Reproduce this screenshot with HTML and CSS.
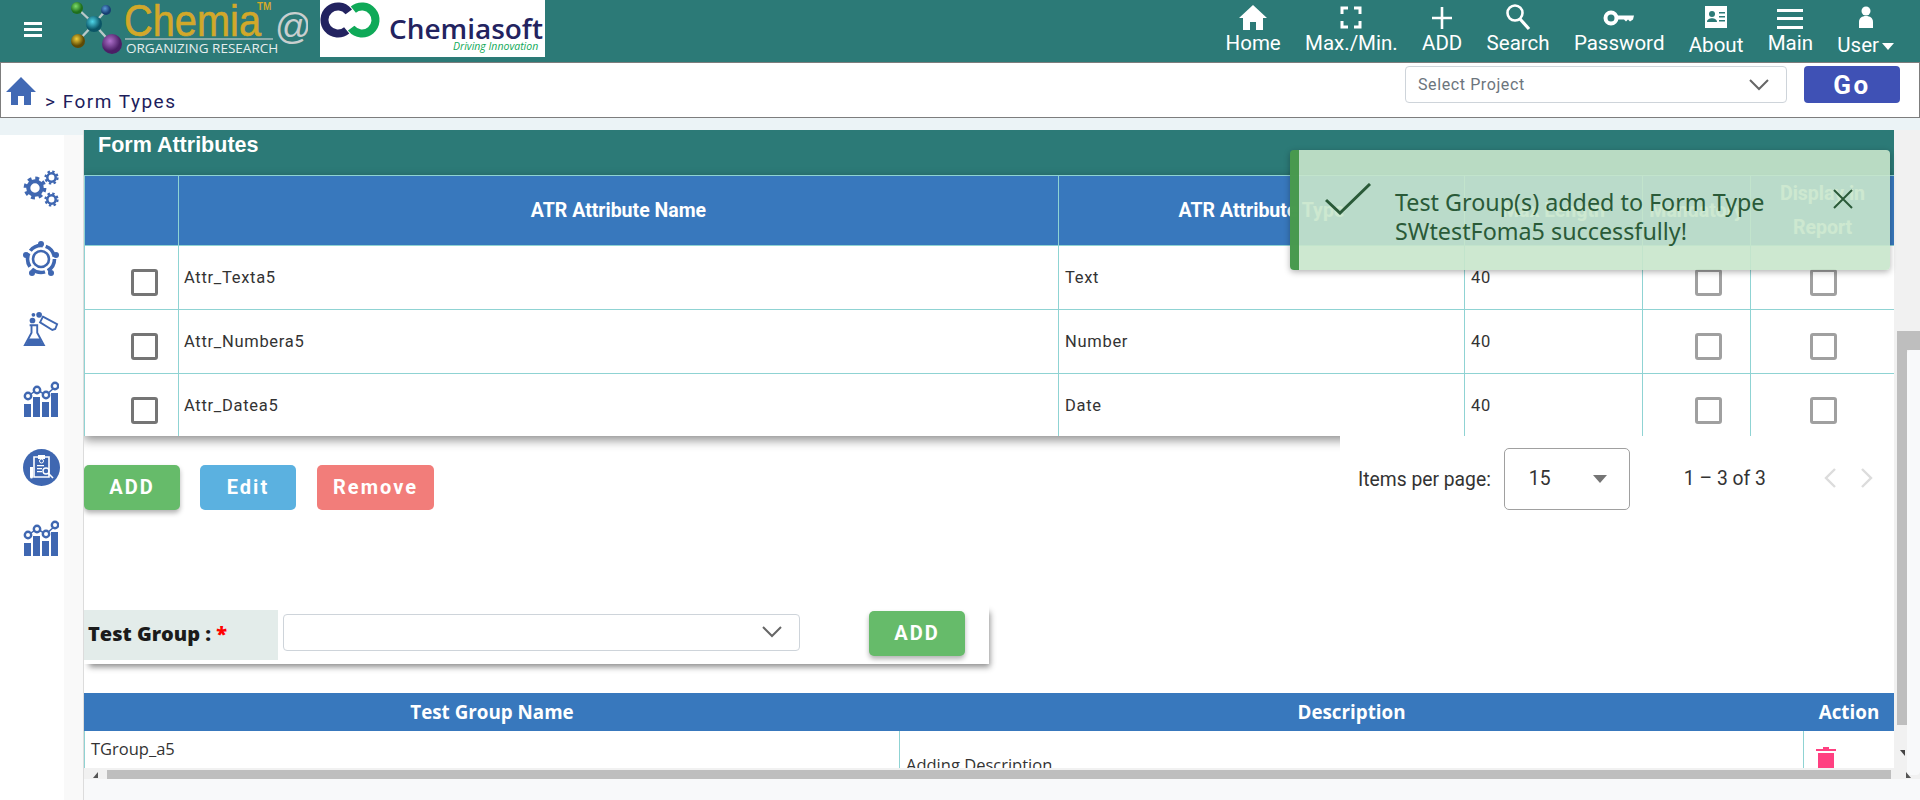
FILE: index.html
```html
<!DOCTYPE html>
<html lang="en">
<head>
  <meta charset="UTF-8" />
  <title>Form Types</title>
  <link rel="stylesheet" href="styles.css">
</head>
<body>

  <svg class="defs" width="0" height="0">
    <defs>
      <radialGradient id="ball-green" cx="40%" cy="35%"><stop offset="0" stop-color="#7ddc6a"/><stop offset="1" stop-color="#1f6f1c"/></radialGradient>
      <radialGradient id="ball-blue" cx="40%" cy="35%"><stop offset="0" stop-color="#5a9ad8"/><stop offset="1" stop-color="#173f73"/></radialGradient>
      <radialGradient id="ball-teal" cx="40%" cy="35%"><stop offset="0" stop-color="#4fd5e8"/><stop offset="1" stop-color="#0b5566"/></radialGradient>
      <radialGradient id="ball-gold" cx="40%" cy="35%"><stop offset="0" stop-color="#f0cf3a"/><stop offset="1" stop-color="#5e4a05"/></radialGradient>
      <radialGradient id="ball-purple" cx="40%" cy="35%"><stop offset="0" stop-color="#b072cc"/><stop offset="1" stop-color="#4b1f66"/></radialGradient>
    </defs>
    <symbol id="gear" viewBox="0 0 20 20">
      <circle cx="10" cy="10" r="8" fill="none" stroke="currentColor" stroke-width="3" stroke-dasharray="3.2 3.08"/>
      <circle cx="10" cy="10" r="5.6" fill="none" stroke="currentColor" stroke-width="3.4"/>
    </symbol>
    <symbol id="chart" viewBox="0 0 36 36">
      <path d="M1 23h7v13H1zM10 16h7v20h-7zM19 21h7v15h-7zM28 12h7v24h-7z" fill="currentColor"/>
      <path d="M5 15l9-6 9 5 9-8" fill="none" stroke="currentColor" stroke-width="1.5"/>
      <circle cx="5" cy="15" r="3.2" fill="#fff" stroke="currentColor" stroke-width="2.4"/>
      <circle cx="14" cy="9" r="3.2" fill="#fff" stroke="currentColor" stroke-width="2.4"/>
      <circle cx="23" cy="14" r="3.2" fill="#fff" stroke="currentColor" stroke-width="2.4"/>
      <circle cx="32" cy="5" r="3.2" fill="#fff" stroke="currentColor" stroke-width="2.4"/>
    </symbol>
  </svg>

  <!-- Top bar -->
  <div class="header">
    <div class="brand">
      <div class="menu-btn"><span></span><span></span><span></span></div>
      <svg class="logo-chemia" width="240" height="56" viewBox="0 0 240 56">
        <path d="M9 8l17 16M38 10L26 24M10 41l16-17M44 44L26 24" stroke="#b9c9c9" stroke-width="2.4"/>
        <circle cx="9" cy="8" r="6" fill="url(#ball-green)"/>
        <circle cx="38" cy="10" r="5" fill="url(#ball-blue)"/>
        <circle cx="26" cy="24" r="8" fill="url(#ball-teal)"/>
        <circle cx="10" cy="41" r="7" fill="url(#ball-gold)"/>
        <circle cx="44" cy="44" r="10" fill="url(#ball-purple)"/>
        <text x="56" y="36" class="logo-name" textLength="137" lengthAdjust="spacingAndGlyphs">Chemia</text>
        <text x="189" y="10" class="logo-tm">TM</text>
        <path d="M57 39h148" stroke="#a9bdbd" stroke-width="1.5"/>
        <text x="58" y="53" class="logo-sub">ORGANIZING RESEARCH</text>
        <text x="207" y="39" class="logo-at">@</text>
      </svg>
      <svg class="logo-soft" width="225" height="57" viewBox="0 0 225 57">
        <circle cx="18" cy="20" r="13.5" fill="none" stroke="#232360" stroke-width="8" stroke-dasharray="64 21" transform="rotate(50 18 20)"/>
        <circle cx="42" cy="20" r="13.5" fill="none" stroke="#0fa958" stroke-width="8" stroke-dasharray="64 21" transform="rotate(230 42 20)"/>
        <text x="69" y="39" class="soft-name" textLength="154" lengthAdjust="spacingAndGlyphs">Chemiasoft</text>
        <text x="133" y="50" class="soft-tag">Driving Innovation</text>
      </svg>
    </div>
    <div class="nav">
      <div class="nav-item">
        <svg width="30" height="26" viewBox="0 0 30 26"><path d="M15 1L1 14h4v12h7v-8h6v8h7V14h4z" fill="#fff"/></svg>
        <span>Home</span>
      </div>
      <div class="nav-item">
        <svg width="24" height="26" viewBox="0 0 24 26"><path d="M3 10V4h6M15 4h6v6M21 17v6h-6M9 23H3v-6" fill="none" stroke="#fff" stroke-width="3"/></svg>
        <span>Max./Min.</span>
      </div>
      <div class="nav-item">
        <svg width="24" height="26" viewBox="0 0 24 26"><path d="M12 3v22M2 14h20" stroke="#fff" stroke-width="2.6"/></svg>
        <span>ADD</span>
      </div>
      <div class="nav-item">
        <svg width="28" height="28" viewBox="0 0 28 28"><circle cx="11" cy="10" r="7.5" fill="none" stroke="#fff" stroke-width="2.6"/><path d="M16 16l9 10" stroke="#fff" stroke-width="3.2"/></svg>
        <span>Search</span>
      </div>
      <div class="nav-item">
        <svg width="32" height="26" viewBox="0 0 32 26"><circle cx="8" cy="14" r="5.5" fill="none" stroke="#fff" stroke-width="4"/><path d="M13 11.5h18l-1 4-3 2-2-2-2 2-2-2h-8z" fill="#fff"/></svg>
        <span>Password</span>
      </div>
      <div class="nav-item nav-low">
        <svg width="26" height="26" viewBox="0 0 26 26"><path d="M2 2h22v22H2z" fill="#fff"/><circle cx="9" cy="10" r="3" fill="#2c7a77"/><path d="M4 18c0-5 10-5 10 0zM16 8h6v1.5h-6zM16 12h6v1.5h-6zM16 16h6v1.5h-6z" fill="#2c7a77"/></svg>
        <span>About</span>
      </div>
      <div class="nav-item">
        <svg width="26" height="26" viewBox="0 0 26 26"><path d="M0 5h26v3H0zM0 13h26v3H0zM0 22h26v3H0z" fill="#fff"/></svg>
        <span>Main</span>
      </div>
      <div class="nav-item nav-low">
        <svg width="18" height="26" viewBox="0 0 18 26"><circle cx="9" cy="7" r="4.5" fill="#fff"/><path d="M2 24v-6c0-4 3-6 7-6s7 2 7 6v6z" fill="#fff"/></svg>
        <span>User<i class="caret"></i></span>
      </div>
    </div>
  </div>

  <!-- Breadcrumb bar -->
  <div class="crumb-bar">
    <div class="crumb">
      <svg width="32" height="32" viewBox="0 0 32 32"><path d="M16 2L1 17h5v13h7v-9h6v9h7V17h5z" fill="#4169b4"/></svg>
      <span>&gt; Form Types</span>
    </div>
    <div class="crumb-tools">
      <div class="select select-project">
        <span>Select Project</span>
        <svg width="22" height="12" viewBox="0 0 22 12"><path d="M2 1l9 9 9-9" fill="none" stroke="#666" stroke-width="2"/></svg>
      </div>
      <button class="btn-go">Go</button>
    </div>
  </div>

  <div class="layout">
    <div class="sidebar">
      <svg class="side-icon" width="36" height="37" viewBox="0 0 36 37">
        <use href="#gear" x="0" y="6" width="24" height="24"/>
        <use href="#gear" x="21" y="0" width="15" height="15"/>
        <use href="#gear" x="21" y="22" width="15" height="15"/>
      </svg>
      <svg class="side-icon" width="36" height="36" viewBox="0 0 36 36">
        <circle cx="18" cy="18" r="8" fill="none" stroke="currentColor" stroke-width="2.6"/>
        <circle cx="18" cy="18" r="13.5" fill="none" stroke="currentColor" stroke-width="3.6" stroke-dasharray="14 3"/>
        <circle cx="18" cy="3" r="3" fill="currentColor"/>
        <circle cx="33" cy="14" r="3" fill="currentColor"/>
        <circle cx="3" cy="14" r="3" fill="currentColor"/>
        <circle cx="9" cy="32" r="3" fill="currentColor"/>
        <circle cx="28" cy="32" r="3" fill="currentColor"/>
      </svg>
      <svg class="side-icon" width="36" height="36" viewBox="0 0 36 38">
        <path d="M6 15h9M8 15v8L1 36h20l-7-13v-8" fill="none" stroke="currentColor" stroke-width="2"/>
        <path d="M5 29L2 36h18l-3-7z" fill="currentColor"/>
        <circle cx="9" cy="10" r="3" fill="currentColor"/>
        <circle cx="16" cy="4" r="3" fill="currentColor"/>
        <circle cx="10" cy="4" r="2" fill="currentColor"/>
        <path d="M20 6l15 8-2 5-3 1-13-8z" fill="none" stroke="currentColor" stroke-width="2"/>
      </svg>
      <svg class="side-icon" width="36" height="36"><use href="#chart"/></svg>
      <svg class="side-icon icon-report" width="37" height="37" viewBox="0 0 37 37">
        <circle cx="18.5" cy="18.5" r="18.5" fill="currentColor"/>
        <path d="M11 8h15v20H11z" fill="none" stroke="#fff" stroke-width="1.6"/>
        <path d="M15 6h7v4h-7zM14 16h7v1.2h-7zM14 19h5v1.2h-5zM14 22h5v1.2h-5zM7 18h3v10a1.5 1.5 0 0 1-3 0z" fill="#fff"/>
        <circle cx="18.5" cy="12" r="2" fill="none" stroke="#fff"/>
        <circle cx="23" cy="22" r="3" fill="none" stroke="#fff" stroke-width="1.4"/>
        <path d="M25 24l5 5" stroke="#fff" stroke-width="1.6"/>
      </svg>
      <svg class="side-icon" width="36" height="36"><use href="#chart"/></svg>
    </div>

    <div class="content">
      <div class="content-top">
        <div class="main-scroll">

          <div class="panel-title">Form Attributes</div>
          <table class="attr-table">
            <colgroup>
              <col class="c-check"><col class="c-name"><col class="c-type"><col class="c-len"><col class="c-man"><col class="c-disp">
            </colgroup>
            <thead>
              <tr>
                <th></th>
                <th>ATR Attribute Name</th>
                <th>ATR Attribute Type</th>
                <th>Max Length</th>
                <th>Mandatory</th>
                <th class="th-wrap">Display in<br>Report</th>
              </tr>
            </thead>
            <tbody>
              <tr>
                <td class="td-check"><span class="check"></span></td>
                <td class="td-name">Attr_Texta5</td>
                <td>Text</td>
                <td>40</td>
                <td class="td-man"><span class="check light"></span></td>
                <td class="td-disp"><span class="check light"></span></td>
              </tr>
              <tr>
                <td class="td-check"><span class="check"></span></td>
                <td class="td-name">Attr_Numbera5</td>
                <td>Number</td>
                <td>40</td>
                <td class="td-man"><span class="check light"></span></td>
                <td class="td-disp"><span class="check light"></span></td>
              </tr>
              <tr>
                <td class="td-check"><span class="check"></span></td>
                <td class="td-name">Attr_Datea5</td>
                <td>Date</td>
                <td>40</td>
                <td class="td-man"><span class="check light"></span></td>
                <td class="td-disp"><span class="check light"></span></td>
              </tr>
            </tbody>
          </table>

          <div class="table-foot">
            <div class="actions">
              <button class="btn btn-add raised">ADD</button>
              <button class="btn btn-edit">Edit</button>
              <button class="btn btn-remove">Remove</button>
            </div>
            <div class="paginator">
              <span class="pg-label">Items per page:</span>
              <div class="pg-select"><span>15</span><i class="pg-arrow"></i></div>
              <span class="pg-range">1 – 3 of 3</span>
              <svg width="50" height="22" viewBox="0 0 50 22"><path d="M11 2L2 11l9 9M38 2l9 9-9 9" fill="none" stroke="#dcdcdc" stroke-width="2.4"/></svg>
            </div>
          </div>

          <div class="group-form">
            <label class="group-label">Test Group : <b>*</b></label>
            <div class="select select-group">
              <svg width="22" height="12" viewBox="0 0 22 12"><path d="M2 1l9 9 9-9" fill="none" stroke="#666" stroke-width="2"/></svg>
            </div>
            <button class="btn btn-add raised btn-group-add">ADD</button>
          </div>

          <table class="group-table">
            <colgroup><col class="g-name"><col class="g-desc"><col class="g-act"></colgroup>
            <thead>
              <tr><th>Test Group Name</th><th>Description</th><th>Action</th></tr>
            </thead>
            <tbody>
              <tr>
                <td class="td-top">TGroup_a5</td>
                <td>Adding Description</td>
                <td class="td-top">
                  <svg class="trash" width="20" height="26" viewBox="0 0 20 26"><path d="M0 2h7V0h6v2h7v2H0zM2 6h16v20H2z" fill="#ff4081"/></svg>
                </td>
              </tr>
            </tbody>
          </table>

        </div>
        <div class="vscroll">
          <div class="v-thumb"></div>
          <i class="v-arrow"></i>
          <div class="v-panel"></div>
        </div>
      </div>
      <div class="hscroll">
        <i class="h-left"></i>
        <div class="h-thumb"></div>
        <i class="h-right"></i>
      </div>
      <div class="bottom-panel"></div>
    </div>
  </div>

  <!-- Toast -->
  <div class="toast">
    <svg class="toast-check" width="46" height="32" viewBox="0 0 46 32"><path d="M1 17l14 13L45 1" fill="none" stroke="#2a5a38" stroke-width="3"/></svg>
    <div class="toast-text">Test Group(s) added to Form Type<br>SWtestFoma5 successfully!</div>
    <svg class="toast-close" width="20" height="20" viewBox="0 0 20 20"><path d="M1 1l18 18M19 1L1 19" stroke="#2a5a38" stroke-width="2"/></svg>
  </div>

</body>
</html>
```

FILE: styles.css
```css
* {
  box-sizing: border-box;
}

html, body {
  margin: 0;
  padding: 0;
  height: 100%;
  overflow: hidden;
  background: #ebf3f6;
  font-family: Roboto, Arial, sans-serif;
}

body {
  position: relative;
}

.defs {
  position: absolute;
}

/* top bar */
.header {
  height: 62px;
  background: #2c7a77;
  display: flex;
  justify-content: space-between;
  color: #fff;
}

.brand {
  display: flex;
  align-items: flex-start;
}

.menu-btn {
  width: 18px;
  margin: 22px 26px 0 24px;
  display: flex;
  flex-direction: column;
  gap: 3px;
}

.menu-btn span {
  display: block;
  height: 3px;
  background: #fff;
}

.logo-chemia {
  display: block;
}

.logo-name {
  font: 400 44px "Liberation Sans", sans-serif;
  fill: #d2a82a;
  stroke: #d2a82a;
  stroke-width: 0.6px;
}

.logo-tm {
  font: 700 10px "Liberation Sans", sans-serif;
  fill: #d2a82a;
}

.logo-sub {
  font: 400 13.5px "Open Sans", sans-serif;
  fill: #e6eeee;
}

.logo-at {
  font: 400 36px "Liberation Sans", sans-serif;
  fill: #c9cfcf;
}

.logo-soft {
  display: block;
  background: #fff;
  margin-left: 12px;
}

.soft-name {
  font: 600 27px "Open Sans", sans-serif;
  fill: #232360;
}

.soft-tag {
  font: italic 400 10.5px "Open Sans", sans-serif;
  fill: #0fa958;
}

.nav {
  display: flex;
  gap: 24.3px;
  padding-right: 26px;
}

.nav-item {
  display: flex;
  flex-direction: column;
  align-items: center;
  font-size: 20.5px;
  line-height: 24px;
  padding-top: 3px;
}

.nav-low span {
  margin-top: 2px;
}

.nav-item svg {
  height: 28px;
  display: block;
}

.caret {
  display: inline-block;
  margin-left: 3px;
  vertical-align: 2px;
  border: 6px solid transparent;
  border-top: 7px solid #fff;
  border-bottom: 0;
}

/* breadcrumb */
.crumb-bar {
  height: 56px;
  background: #fff;
  border: 1px solid #7d7d7d;
  display: flex;
  justify-content: space-between;
}

.crumb {
  display: flex;
  align-items: flex-end;
  gap: 8px;
  padding: 0 0 4px 4px;
  color: #1d1d5c;
  font-size: 19px;
  letter-spacing: 1.5px;
}

.crumb svg {
  margin-bottom: 6px;
}

.crumb-tools {
  display: flex;
  gap: 17px;
  padding: 3px 19px 0 0;
}

.select {
  height: 37px;
  background: #fff;
  border: 1px solid #ced4da;
  border-radius: 4px;
  display: flex;
  align-items: center;
  justify-content: space-between;
}

.select-project {
  width: 382px;
  padding: 0 16px 0 12px;
  color: #6c757d;
  font-size: 16px;
  letter-spacing: 0.6px;
}

.btn-go {
  width: 96px;
  height: 37px;
  border: 0;
  border-radius: 4px;
  background: #3f51b5;
  color: #fff;
  font: 700 26px Roboto, sans-serif;
  letter-spacing: 2.5px;
}

/* page body */
.layout {
  display: flex;
  margin-top: 12px;
  height: 670px;
}

.sidebar {
  width: 64px;
  margin-top: 5px;
  background: #fff;
  display: flex;
  flex-direction: column;
  align-items: center;
  flex-shrink: 0;
  padding: 35px 0 0 18px;
  gap: 34px;
  color: #3f67b1;
}

.side-icon {
  display: block;
  flex-shrink: 0;
}

.icon-report {
  margin-top: -2px;
}

.content {
  flex: 1;
  margin-left: 19px;
  background: #f8f9fa;
  box-shadow: -19px 5px 0 #f9f9f9;
  border-left: 1px solid #dcdcdc;
  position: relative;
}

.content-top {
  display: flex;
  height: 638px;
}

.main-scroll {
  width: 1810px;
  flex-shrink: 0;
  overflow: hidden;
  background: #fff;
}

.panel-title {
  height: 45px;
  background: #2c7a77;
  color: #fff;
  padding: 3px 14px;
  font: 700 21.5px "Liberation Sans", Arial, sans-serif;
  line-height: 24px;
}

/* attribute table */
table {
  border-collapse: collapse;
  table-layout: fixed;
  width: 100%;
}

.attr-table {
  box-shadow: 0 4px 10px rgba(0, 0, 0, 0.45);
}

.c-check { width: 94px; }
.c-name { width: 880px; }
.c-type { width: 406px; }
.c-len { width: 178px; }
.c-man { width: 108px; }
.c-disp { width: 144px; }

.attr-table th {
  height: 70px;
  background: #3878bd;
  color: #fff;
  border: 1px solid #8fd3d3;
  font-size: 19.5px;
  font-weight: 700;
  text-align: center;
  padding: 0;
}

.attr-table .th-wrap {
  line-height: 34px;
}

.attr-table td {
  height: 64px;
  background: #fff;
  border: 1px solid #8fd3d3;
  color: #333;
  font-size: 16.5px;
  letter-spacing: 0.7px;
  padding: 0 6px;
  vertical-align: middle;
}

.attr-table tbody tr:last-child td {
  height: 62px;
  padding-top: 2px;
  border-bottom: 0;
}

.attr-table .td-name {
  padding-left: 5px;
}

.attr-table .td-check {
  padding-left: 46px;
}

.attr-table .td-man {
  padding-left: 52px;
}

.attr-table .td-disp {
  padding-left: 59px;
}

.check {
  display: block;
  width: 27px;
  height: 27px;
  margin-top: 10px;
  border: 3px solid #757575;
  border-radius: 3px;
}

.check.light {
  border-color: #a0a0a0;
}

/* buttons + paginator */
.table-foot {
  position: relative;
  height: 169px;
  display: flex;
  justify-content: space-between;
}

.actions {
  display: flex;
  gap: 20px;
  align-items: flex-start;
  padding-top: 29px;
}

.btn {
  height: 45px;
  border: 0;
  border-radius: 5px;
  color: #fff;
  font: 700 20px Roboto, sans-serif;
  letter-spacing: 2px;
  width: 96px;
}

.raised {
  box-shadow: 0 3px 5px rgba(0, 0, 0, 0.3);
}

.btn-add {
  background: #66bb6a;
}

.btn-edit {
  background: #5bb1e0;
}

.btn-remove {
  background: #f27d7a;
  width: 117px;
  margin-left: 1px;
}

.paginator {
  width: 554px;
  height: 90px;
  background: #fff;
  display: flex;
  align-items: flex-start;
  padding: 12px 0 0 18px;
  color: #333;
  font-size: 19.3px;
}

.pg-label {
  margin-top: 20px;
}

.pg-select {
  width: 126px;
  height: 62px;
  margin-left: 13px;
  border: 1px solid #a0a0a0;
  border-radius: 5px;
  padding: 0 24px;
  display: flex;
  align-items: center;
  justify-content: space-between;
}

.pg-arrow {
  border: 7px solid transparent;
  border-top: 8px solid #757575;
  border-bottom: 0;
  margin-right: -2px;
}

.pg-range {
  margin: 19px 58px 0 54px;
}

.paginator svg {
  margin-top: 19px;
}

/* test group form */
.group-form {
  width: 905px;
  height: 59px;
  display: flex;
  align-items: flex-start;
  background: #fff;
  box-shadow: 3px 5px 6px -2px rgba(0, 0, 0, 0.45);
  padding-top: 5px;
}

.group-label {
  width: 194px;
  height: 50px;
  background: #e3ecea;
  color: #1b1b1b;
  font: 800 20px "Open Sans", sans-serif;
  line-height: 47px;
  padding-left: 4px;
}

.group-label b {
  color: #f00;
}

.select-group {
  width: 517px;
  margin: 4px 0 0 5px;
  justify-content: flex-end;
  padding-right: 16px;
}

.btn-group-add {
  margin: 1px 0 0 69px;
}

/* test group table */
.group-table {
  margin-top: 29px;
}

.g-name { width: 815px; }
.g-desc { width: 904px; }
.g-act { width: 91px; }

.group-table th {
  height: 37px;
  background: #3878bd;
  border: 1px solid #3878bd;
  color: #fff;
  font: 700 18.8px "Open Sans", sans-serif;
  padding: 0;
}

.group-table td {
  height: 68px;
  border: 1px solid #8fd3d3;
  color: #333;
  font: 400 16.5px "Open Sans", sans-serif;
  padding: 6px;
  vertical-align: middle;
}

.group-table .td-top {
  vertical-align: top;
}

.trash {
  display: block;
  margin: 10px 0 0 6px;
}

/* fake scrollbars */
.vscroll {
  flex: 1;
  position: relative;
  background: #f1f1f1;
}

.v-thumb {
  width: 10px;
  height: 394px;
  margin: 201px 0 0 3px;
  background: #bebebe;
}

.v-arrow {
  position: absolute;
  left: 6px;
  top: 620px;
  border-top: 6px solid #444;
  border-left: 5px solid transparent;
}

.v-panel {
  position: absolute;
  top: 201px;
  left: 3px;
  right: 0;
  height: 444px;
  background: linear-gradient(#bebebe 19px, transparent 19px);
}

.v-panel::after {
  content: "";
  position: absolute;
  top: 19px;
  left: 10px;
  right: 0;
  bottom: 0;
  background: #f8f9fa;
  border-radius: 4px 0 4px 4px;
}

.hscroll {
  height: 11px;
  width: 1836px;
  background: #f1f1f1;
  display: flex;
  align-items: stretch;
  padding-right: 29px;
}

.h-thumb {
  flex: 1;
  margin: 2px 0 0 23px;
  background: #bebebe;
}

.h-left,
.h-right {
  align-self: flex-end;
  width: 0;
  height: 0;
  margin-bottom: 1px;
  border-bottom: 6px solid #555;
}

.h-left {
  margin-left: 9px;
  margin-right: -14px;
  border-left: 5px solid transparent;
}

.h-right {
  margin-left: 15px;
  margin-right: -20px;
  border-right: 5px solid transparent;
}

.bottom-panel {
  width: 1829px;
  height: 14px;
  background: #f8f9fa;
  border-radius: 0 0 4px 4px;
}

/* toast */
.toast {
  position: absolute;
  left: 1290px;
  top: 150px;
  width: 600px;
  height: 120px;
  display: flex;
  align-items: flex-start;
  background: rgba(200, 230, 203, 0.905);
  border-left: 9px solid rgba(66, 150, 72, 0.95);
  border-radius: 4px;
  box-shadow: 0 2px 6px rgba(0, 0, 0, 0.3);
  color: #2a5a38;
}

.toast-check {
  margin: 33px 0 0 26px;
  flex-shrink: 0;
}

.toast-text {
  margin: 38px 0 0 24px;
  width: 438px;
  flex-shrink: 0;
  font: 400 23.3px/29px "Noto Sans", sans-serif;
}

.toast-close {
  margin: 39px 0 0 0;
}
```
